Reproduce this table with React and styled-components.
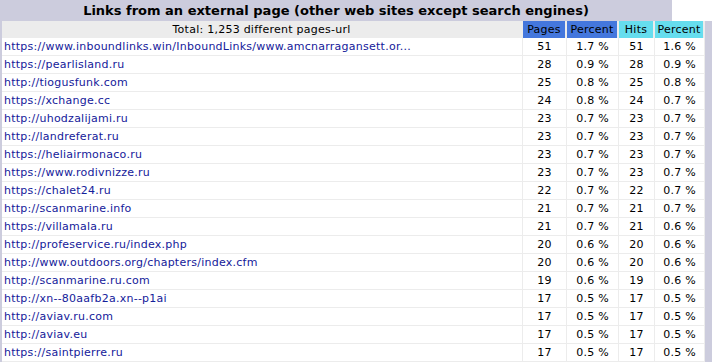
import React from "react";
import styled, { createGlobalStyle } from "styled-components";

const Global = createGlobalStyle`
  html, body { margin: 0; padding: 0; background: #fff; }
  body { font-family: "DejaVu Sans", Verdana, sans-serif; }
`;

const rows = [
  ["https://www.inboundlinks.win/InboundLinks/www.amcnarragansett.or...", 51, "1.7 %", 51, "1.6 %"],
  ["https://pearlisland.ru", 28, "0.9 %", 28, "0.9 %"],
  ["http://tiogusfunk.com", 25, "0.8 %", 25, "0.8 %"],
  ["https://xchange.cc", 24, "0.8 %", 24, "0.7 %"],
  ["http://uhodzalijami.ru", 23, "0.7 %", 23, "0.7 %"],
  ["http://landreferat.ru", 23, "0.7 %", 23, "0.7 %"],
  ["https://heliairmonaco.ru", 23, "0.7 %", 23, "0.7 %"],
  ["https://www.rodivnizze.ru", 23, "0.7 %", 23, "0.7 %"],
  ["https://chalet24.ru", 22, "0.7 %", 22, "0.7 %"],
  ["http://scanmarine.info", 21, "0.7 %", 21, "0.7 %"],
  ["https://villamala.ru", 21, "0.7 %", 21, "0.6 %"],
  ["http://profeservice.ru/index.php", 20, "0.6 %", 20, "0.6 %"],
  ["http://www.outdoors.org/chapters/index.cfm", 20, "0.6 %", 20, "0.6 %"],
  ["http://scanmarine.ru.com", 19, "0.6 %", 19, "0.6 %"],
  ["http://xn--80aafb2a.xn--p1ai", 17, "0.5 %", 17, "0.5 %"],
  ["http://aviav.ru.com", 17, "0.5 %", 17, "0.5 %"],
  ["http://aviav.eu", 17, "0.5 %", 17, "0.5 %"],
  ["https://saintpierre.ru", 17, "0.5 %", 17, "0.5 %"],
];

const widths = [521, 44, 52, 36, 50];

const Page = styled.div`
  width: 712px;
  height: 362px;
  overflow: hidden;
`;

const TitleRow = styled.div`
  display: flex;
  height: 21px;
`;

const Title = styled.div`
  width: 672px;
  background: #ccccdd;
  color: #000;
  font-weight: bold;
  font-size: 13px;
  line-height: 21px;
  text-align: center;
`;

const Frame = styled.div`
  background: #ccccdd;
  padding: 0 7px 0 2px;
  width: 712px;
  box-sizing: border-box;
`;

const Table = styled.table`
  width: 703px;
  table-layout: fixed;
  border-collapse: separate;
  border-spacing: 0;
  font-size: 11px;
  letter-spacing: 0.25px;
  background: #fff;
`;

const Col = styled.col`
  width: ${(p) => p.$w}px;
`;

const HeadRow = styled.tr`
  background: #ececec;
`;

const HeadCell = styled.th`
  font-weight: normal;
  height: 17px;
  padding: 0;
  text-align: center;
  white-space: nowrap;
  background: ${(p) => p.$bg || "#ececec"};
  color: #000;
  border-right: 2px solid #ececec;
  box-sizing: border-box;
`;

const Cell = styled.td`
  height: 17px;
  padding: 0 0 0 ${(p) => (p.$left ? "2px" : "0")};
  border-right: 1px solid #ececec;
  border-bottom: 1px solid #ececec;
  text-align: ${(p) => (p.$left ? "left" : "center")};
  white-space: nowrap;
  overflow: hidden;
  color: #000;
`;

const Link = styled.a`
  color: #14209a;
  text-decoration: none;
`;

export default function App() {
  return (
    <Page>
      <Global />
      <TitleRow>
        <Title>Links from an external page (other web sites except search engines)</Title>
      </TitleRow>
      <Frame>
        <Table>
          <colgroup>
            {widths.map((w, i) => (
              <Col key={i} $w={w} />
            ))}
          </colgroup>
          <thead>
            <HeadRow>
              <HeadCell>Total: 1,253 different pages-url</HeadCell>
              <HeadCell $bg="#4477dd">Pages</HeadCell>
              <HeadCell $bg="#4477dd">Percent</HeadCell>
              <HeadCell $bg="#66ddee">Hits</HeadCell>
              <HeadCell $bg="#66ddee">Percent</HeadCell>
            </HeadRow>
          </thead>
          <tbody>
            {rows.map((r, i) => (
              <tr key={i}>
                <Cell $left>
                  <Link href="#">{r[0]}</Link>
                </Cell>
                <Cell>{r[1]}</Cell>
                <Cell>{r[2]}</Cell>
                <Cell>{r[3]}</Cell>
                <Cell>{r[4]}</Cell>
              </tr>
            ))}
          </tbody>
        </Table>
      </Frame>
    </Page>
  );
}
